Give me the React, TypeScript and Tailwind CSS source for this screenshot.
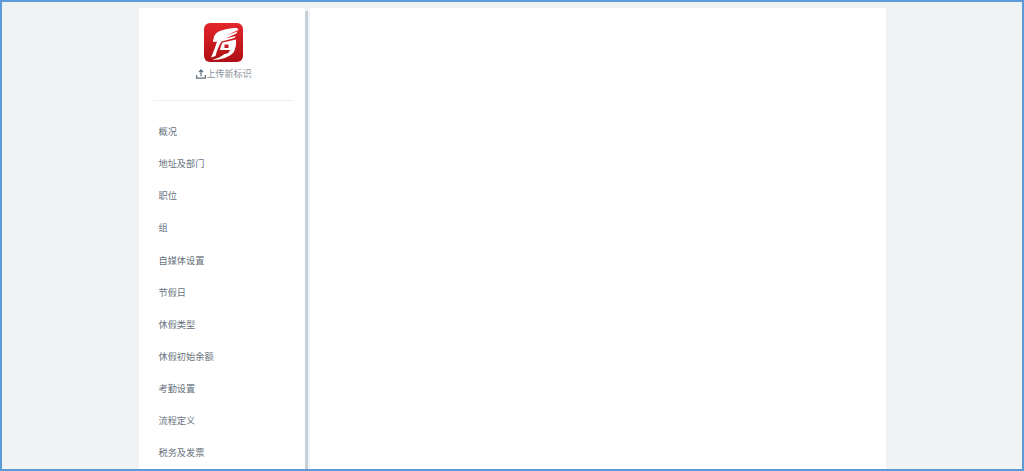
import React from 'react';

const menuItems = ['概况', '地址及部门', '职位', '组', '自媒体设置', '节假日', '休假类型', '休假初始余额', '考勤设置', '流程定义', '税务及发票'];

const Logo = () => (
  <svg width="39" height="39" viewBox="0 0 39 39">
    <defs>
      <linearGradient id="logoBg" x1="0" y1="0" x2="0" y2="1">
        <stop offset="0" stopColor="#e3262b" />
        <stop offset="1" stopColor="#ae0f14" />
      </linearGradient>
    </defs>
    <rect width="39" height="39" rx="6" fill="url(#logoBg)" />
    {/* wing */}
    <path d="M33 5 C26 5 17 6.500 12.500 10 C10 12 9.500 15 9 19 L13 18.500 C11.500 23 9.500 29 7 34.500 L11.500 33 C13 27 15 22.500 17.500 18.500 L30.500 15 L31.500 13 L21.500 15.500 L32.500 10.500 L33.500 8.500 L22.500 12 L34.500 7 Z" fill="#fff" />
    {/* lower body with square hole */}
    <path d="M18.500 19.500 L32 16.500 C32.500 21 31.500 26 29.500 29.500 C26 34 17 37 8 37 C13 35.500 17.500 33.500 20.500 31 C23 31 25.500 29.500 26 27 L16 27 C16.500 24 17.500 21.500 18.500 19.500 Z M20.500 21.500 L20.500 25 L24.500 25 L24.500 21.500 Z" fill="#fff" fillRule="evenodd" />
  </svg>
);

const UploadIcon = () => (
  <svg width="10" height="10" viewBox="0 0 10 10" fill="none" stroke="#5f6f7c" strokeWidth="1.2">
    <path d="M0.6 6 V9.2 H9.4 V6" />
    <path d="M5 7.2 V1.2 M3 3.2 L5 1 L7 3.2" />
  </svg>
);

const App: React.FC = () => {
  return (
    <div className="h-screen overflow-hidden border-2 border-[#5b9bd8] bg-[#eff3f4] font-['Liberation_Sans','Noto_Sans_CJK_SC',sans-serif]">
      <div className="mx-auto mt-1.5 flex h-full w-[747px]">
        <aside className="flex w-[166px] shrink-0 flex-col bg-white">
          <div className="ml-3.5 mr-[11px] flex h-[93px] flex-col items-center border-b border-[#f0f1f2] pt-[15px]">
            <Logo />
            <div className="mt-[5px] flex translate-x-px items-center text-[9px] leading-[14px] text-[#87929c]">
              <UploadIcon />
              <span>上传新标识</span>
            </div>
          </div>
          <ul className="mt-4 pl-5">
            {menuItems.map(item => (
              <li key={item} className="flex h-[32.1px] items-center text-[9.2px] text-[#67727d]">{item}</li>
            ))}
          </ul>
        </aside>
        <div className="mt-[3px] w-[3px] shrink-0 bg-[#c5d0d9]" />
        <div className="w-0.5 shrink-0 bg-[#f1f4f6]" />
        <main className="flex-1 bg-white" />
      </div>
    </div>
  );
};

export default App;
